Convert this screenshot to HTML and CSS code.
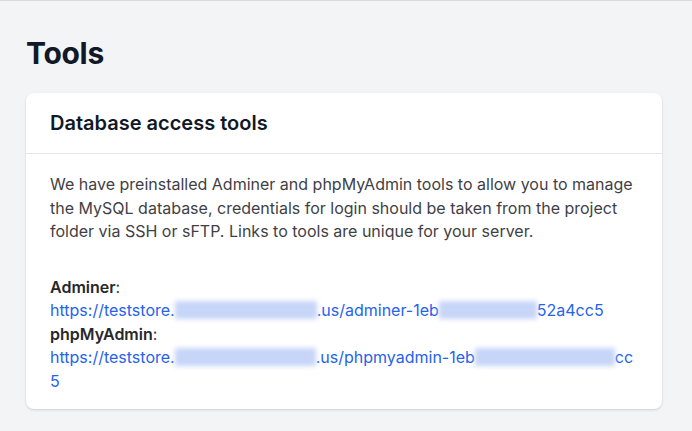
FILE: index.html
```html
<!DOCTYPE html>
<html>
<head>
<meta charset="utf-8">
<link rel="stylesheet" href="styles.css">
</head>
<body>
<main class="page">
  <h1 class="page-title">Tools</h1>
  <section class="card">
    <header class="card-header">
      <h2 class="card-title">Database access tools</h2>
    </header>
    <div class="card-body">
      <p class="intro">We have preinstalled Adminer and phpMyAdmin tools to allow you to manage the MySQL database, credentials for login should be taken from the project folder via SSH or sFTP. Links to tools are unique for your server.</p>
      <div class="links">
        <div class="label"><b>Adminer</b>:</div>
        <a class="link" href="#">https://teststore.<span class="blur b1"></span>.us/adminer-1eb<span class="blur b2"></span>52a4cc5</a>
        <div class="label"><b>phpMyAdmin</b>:</div>
        <a class="link" href="#">https://teststore.<span class="blur b3"></span>.us/phpmyadmin-1eb<span class="blur b4"></span>cc5</a>
      </div>
    </div>
  </section>
</main>
</body>
</html>
```

FILE: styles.css
```css
html, body {
  margin: 0;
  padding: 0;
}
body {
  background: #f3f4f6;
  border-top: 1px solid #d9dbdf;
  font-family: Inter, "Noto Sans", sans-serif;
  color: #111827;
  height: 431px;
  box-sizing: border-box;
  overflow: hidden;
}
.page {
  padding: 33px 30px 0 26px;
}
.page-title {
  margin: 0 0 21px 0;
  font-size: 30px;
  line-height: 38px;
  font-weight: 700;
  color: #111827;
  letter-spacing: -0.3px;
}
.card {
  background: #fff;
  border-radius: 8px;
  box-shadow: 0 1px 3px rgba(0,0,0,0.1), 0 1px 2px rgba(0,0,0,0.06);
}
.card-header {
  padding: 16px 24px;
  border-bottom: 1px solid #e5e7eb;
}
.card-title {
  margin: 0;
  font-size: 20px;
  line-height: 28px;
  font-weight: 600;
  color: #111827;
}
.card-body {
  padding: 19px 24px 16px 24px;
  font-size: 16px;
  line-height: 23.5px;
  color: #3f3f46;
}
.intro {
  margin: 0 0 32px 0;
}
.label b {
  font-weight: 600;
  color: #27272a;
}
.link {
  display: block;
  color: #2563eb;
  text-decoration: none;
  word-break: break-all;
}
.blur {
  display: inline-block;
  height: 18px;
  vertical-align: -3px;
  background: #c6d5f8;
  filter: blur(2.5px);
}
.b1 { width: 142px; }
.b2 { width: 98px; }
.b3 { width: 141px; }
.b4 { width: 140px; }
```
